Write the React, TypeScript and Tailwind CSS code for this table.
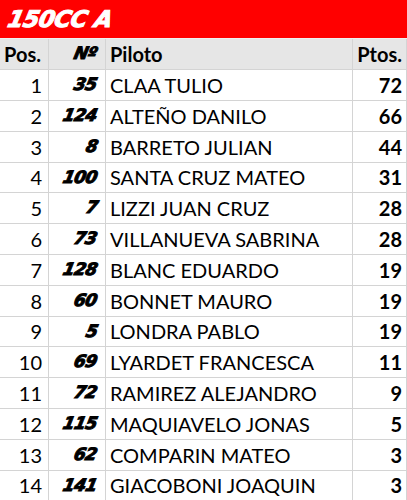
const ROWS = [
  { pos: 1, num: "35", name: "CLAA TULIO", pts: 72 },
  { pos: 2, num: "124", name: "ALTEÑO DANILO", pts: 66 },
  { pos: 3, num: "8", name: "BARRETO JULIAN", pts: 44 },
  { pos: 4, num: "100", name: "SANTA CRUZ MATEO", pts: 31 },
  { pos: 5, num: "7", name: "LIZZI JUAN CRUZ", pts: 28 },
  { pos: 6, num: "73", name: "VILLANUEVA SABRINA", pts: 28 },
  { pos: 7, num: "128", name: "BLANC EDUARDO", pts: 19 },
  { pos: 8, num: "60", name: "BONNET MAURO", pts: 19 },
  { pos: 9, num: "5", name: "LONDRA PABLO", pts: 19 },
  { pos: 10, num: "69", name: "LYARDET FRANCESCA", pts: 11 },
  { pos: 11, num: "72", name: "RAMIREZ ALEJANDRO", pts: 9 },
  { pos: 12, num: "115", name: "MAQUIAVELO JONAS", pts: 5 },
  { pos: 13, num: "62", name: "COMPARIN MATEO", pts: 3 },
  { pos: 14, num: "141", name: "GIACOBONI JOAQUIN", pts: 3 },
];

const cols = "grid grid-cols-[49px_57px_247px_54px]";
const cell = "border-r border-b border-[#d4d4d4] flex items-center";
// racing-style numbers: wide, heavy, slanted
const racing =
  "font-['DejaVu_Sans',sans-serif] font-bold italic tracking-[-0.5px] -skew-x-12 [-webkit-text-stroke:1px_currentColor]";

export default function App() {
  return (
    <div className="w-[407px] h-[500px] overflow-hidden bg-white text-black font-['Lato','Liberation_Sans',sans-serif]">
      <div className="h-[39px] bg-[#ff0000] flex items-center pl-2 border-b border-[#f0f0f0]">
        <span className={`${racing} text-white text-[23px] leading-none`}>
          150CC A
        </span>
      </div>

      <div className={`${cols} h-[31px] bg-[#e6e6e6] text-[20px] font-bold`}>
        <div className={`${cell} justify-start pl-1`}>Pos.</div>
        <div className={`${cell} justify-end pr-2`}>
          <span className={`${racing} text-[17px]`}>Nº</span>
        </div>
        <div className={`${cell} pl-1`}>Piloto</div>
        <div className={`${cell} justify-end pr-1`}>Ptos.</div>
      </div>

      {ROWS.map((r) => (
        <div key={r.pos} className={`${cols} h-[30.8px] text-[20px]`}>
          <div className={`${cell} justify-end pr-1.5`}>{r.pos}</div>
          <div className={`${cell} justify-end pr-2`}>
            <span className={`${racing} text-[17px]`}>{r.num}</span>
          </div>
          <div className={`${cell} pl-1 whitespace-nowrap`}>{r.name}</div>
          <div className={`${cell} justify-end pr-1 font-bold`}>{r.pts}</div>
        </div>
      ))}
    </div>
  );
}
